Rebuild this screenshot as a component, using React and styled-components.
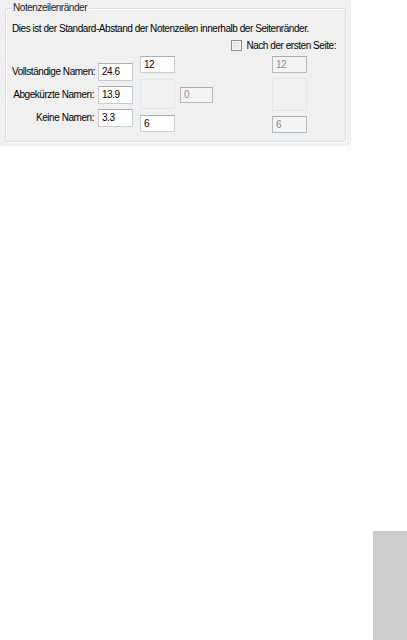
import React from "react";
import styled, { createGlobalStyle } from "styled-components";

const GlobalStyle = createGlobalStyle`
  html, body {
    margin: 0;
    padding: 0;
    background: #ffffff;
  }
  body {
    width: 407px;
    height: 640px;
    overflow: hidden;
    font-family: "Liberation Sans", Arial, sans-serif;
    font-size: 10px;
    letter-spacing: -0.45px;
    color: #000;
  }
`;

const Page = styled.div`
  display: flex;
  flex-direction: column;
  height: 640px;
`;

const Panel = styled.div`
  width: 351px;
  height: 146px;
  background: #f0f0f0;
  box-sizing: border-box;
  padding: 2px 5px 0 5px;
`;

const Group = styled.fieldset`
  margin: 0;
  height: 140px;
  box-sizing: border-box;
  border: 1px solid #d5dfe5;
  border-radius: 3px;
  box-shadow: inset 1px 1px 0 #ffffff, 1px 1px 0 #ffffff;
  padding: 8px 6px 0 6px;
  min-width: 0;
`;

const Legend = styled.legend`
  padding: 0 1px;
  margin-left: 0;
  line-height: 12px;
  color: #1a1a1a;
`;

const Intro = styled.div`
  line-height: 14px;
  white-space: nowrap;
`;

const CheckRow = styled.label`
  display: flex;
  align-items: center;
  justify-content: flex-end;
  gap: 4px;
  margin-top: 3px;
  padding-right: 3px;
  line-height: 13px;
  white-space: nowrap;
`;

const Check = styled.span`
  width: 11px;
  height: 11px;
  box-sizing: border-box;
  border: 1px solid #8e8f8f;
  background: linear-gradient(135deg, #dcdcdc, #f6f6f6);
  box-shadow: inset 0 0 0 1px #f4f4f4;
`;

const Fields = styled.div`
  display: flex;
  align-items: flex-start;
  margin-top: 4px;
`;

const LabelColumn = styled.div`
  display: grid;
  grid-template-columns: 82px 35px;
  column-gap: 4px;
  row-gap: 5px;
  align-items: center;
  margin-top: 7px;
`;

const FieldLabel = styled.span`
  text-align: right;
  line-height: 18px;
  white-space: nowrap;
`;

const Stack = styled.div`
  display: flex;
  flex-direction: column;
  gap: ${(p) => p.$gap}px;
  margin-left: ${(p) => p.$left}px;
  align-self: ${(p) => (p.$center ? "center" : "flex-start")};
`;

const Box = styled.div`
  width: ${(p) => p.$w || 35}px;
  height: ${(p) => p.$h || 17}px;
  box-sizing: border-box;
  padding: 0 3px;
  line-height: ${(p) => (p.$h || 17) - 2}px;
  background: ${(p) => (p.$disabled ? "#f4f4f4" : "#ffffff")};
  color: ${(p) => (p.$disabled ? "#8a8a8a" : "#000")};
  border: 1px solid ${(p) => (p.$disabled ? "#b3b8bc" : "#c9ccd0")};
  border-top-color: ${(p) => (p.$disabled ? "#a8adb1" : "#abadb3")};
`;

const Spacer = styled.div`
  width: 35px;
  height: ${(p) => p.$h}px;
  box-sizing: border-box;
  border: 1px solid #e3e6e9;
  border-radius: 1px;
`;

const SideBar = styled.div`
  margin-top: auto;
  align-self: flex-end;
  width: 34px;
  height: 109px;
  background: #cccccc;
`;

export default function App() {
  return (
    <Page>
      <GlobalStyle />
      <Panel>
        <Group>
          <Legend>Notenzeilenränder</Legend>
          <Intro>Dies ist der Standard-Abstand der Notenzeilen innerhalb der Seitenränder.</Intro>
          <CheckRow>
            <Check />
            Nach der ersten Seite:
          </CheckRow>
          <Fields>
            <LabelColumn>
              <FieldLabel>Vollständige Namen:</FieldLabel>
              <Box $h={18}>24.6</Box>
              <FieldLabel>Abgekürzte Namen:</FieldLabel>
              <Box $h={18}>13.9</Box>
              <FieldLabel>Keine Namen:</FieldLabel>
              <Box $h={18}>3.3</Box>
            </LabelColumn>
            <Stack $gap={6} $left={7}>
              <Box>12</Box>
              <Spacer $h={30} />
              <Box>6</Box>
            </Stack>
            <Stack $gap={0} $left={5} $center>
              <Box $w={33} $h={16} $disabled>0</Box>
            </Stack>
            <Stack $gap={5} $left={59}>
              <Box $disabled>12</Box>
              <Spacer $h={33} />
              <Box $disabled>6</Box>
            </Stack>
          </Fields>
        </Group>
      </Panel>
      <SideBar />
    </Page>
  );
}
